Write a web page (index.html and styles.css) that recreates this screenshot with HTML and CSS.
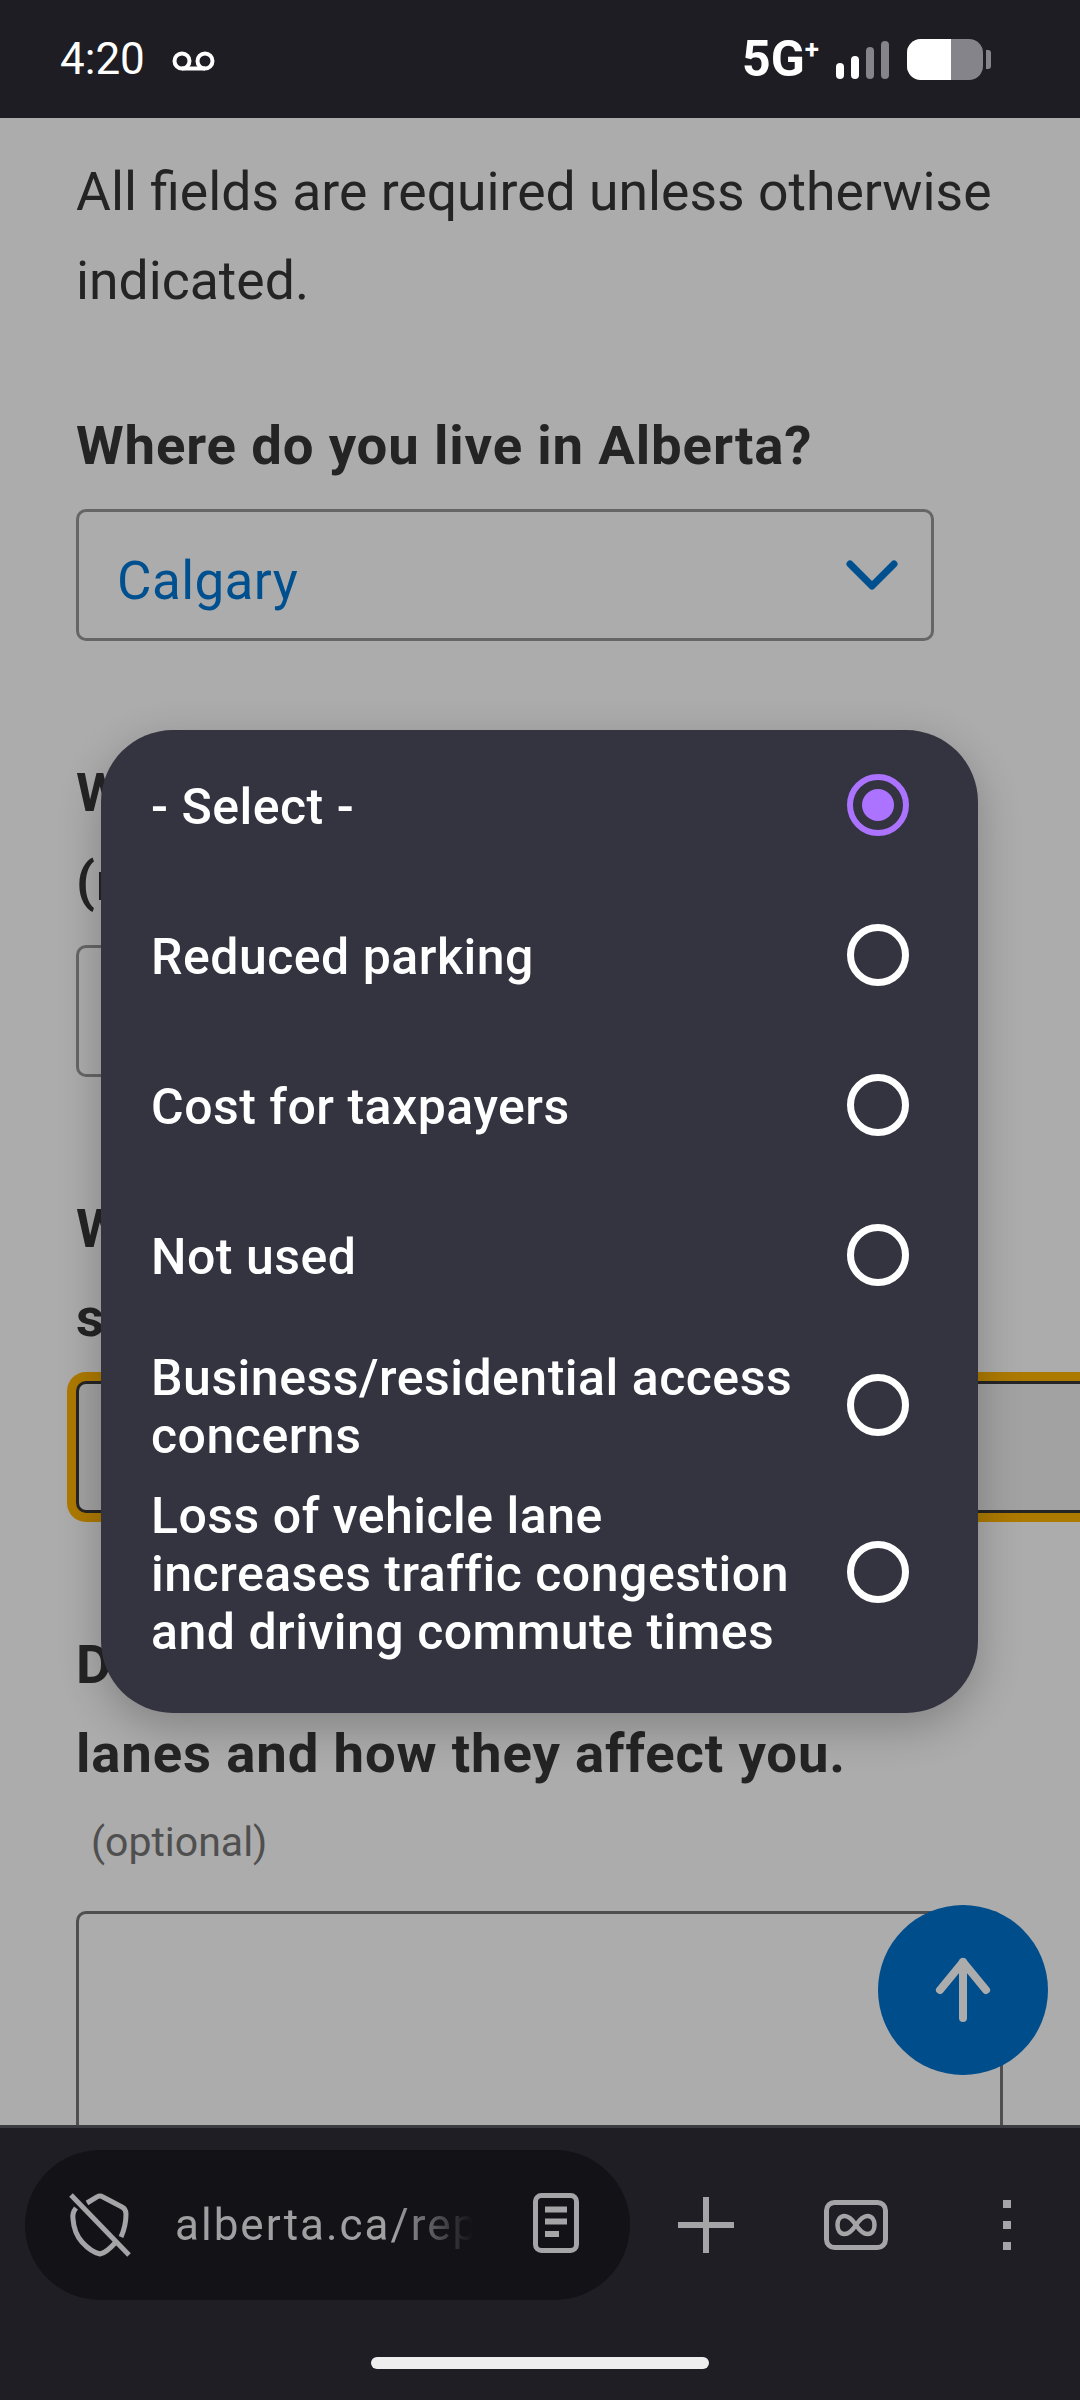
FILE: index.html

```html
<!DOCTYPE html>
<html lang="en">
<head>
  <meta charset="UTF-8" />
  <meta name="viewport" content="width=device-width, initial-scale=1" />
  <title>Report - alberta.ca</title>
  <link rel="stylesheet" href="styles.css">
</head>
<body>
  <header class="status-bar">
    <div class="status-left">
      <span class="clock">4:20</span>
      <svg class="voicemail" width="43" height="20" viewBox="0 0 43 20" fill="none" stroke="#fff" stroke-width="4">
        <circle cx="10" cy="10" r="7.5" />
        <circle cx="33" cy="10" r="7.5" />
        <path d="M10 17.5H33" />
      </svg>
    </div>
    <div class="status-right">
      <span class="network">5G<sup>+</sup></span>
      <div class="signal">
        <span class="bar bar-1"></span>
        <span class="bar bar-2"></span>
        <span class="bar bar-3 off"></span>
        <span class="bar bar-4 off"></span>
      </div>
      <div class="battery"><div class="battery-fill"></div></div>
      <div class="battery-tip"></div>
    </div>
  </header>

  <main class="page">
    <p class="intro">All fields are required unless otherwise indicated.</p>

    <label class="question">Where do you live in Alberta?</label>
    <div class="field select-field">
      <span class="select-value">Calgary</span>
      <svg class="chevron" width="52" height="30" viewBox="0 0 52 30" fill="none" stroke="#00508f" stroke-width="7" stroke-linecap="round" stroke-linejoin="round">
        <path d="M4 4L26 26L48 4" />
      </svg>
    </div>

    <label class="question">W<br>(r</label>
    <div class="field short-field"></div>

    <label class="question">W<br>s</label>
    <div class="field focused"></div>

    <label class="question">D<br>lanes and how they affect you.</label>
    <div class="optional">(optional)</div>
    <div class="textarea"></div>
  </main>

  <button class="to-top" type="button" aria-label="Back to top">
    <svg width="56" height="66" viewBox="0 0 56 66" fill="none" stroke="#acacac" stroke-width="8" stroke-linecap="round" stroke-linejoin="round">
      <path d="M28 5V61" />
      <path d="M5 33L28 5L51 33" />
    </svg>
  </button>

  <div class="picker">
    <div class="option">
      <span class="option-label">- Select -</span>
      <span class="radio checked"></span>
    </div>
    <div class="option">
      <span class="option-label">Reduced parking</span>
      <span class="radio"></span>
    </div>
    <div class="option">
      <span class="option-label">Cost for taxpayers</span>
      <span class="radio"></span>
    </div>
    <div class="option">
      <span class="option-label">Not used</span>
      <span class="radio"></span>
    </div>
    <div class="option">
      <span class="option-label">Business/residential access concerns</span>
      <span class="radio"></span>
    </div>
    <div class="option">
      <span class="option-label">Loss of vehicle lane increases traffic congestion and driving commute times</span>
      <span class="radio"></span>
    </div>
  </div>

  <footer class="browser-bar">
    <div class="toolbar">
      <div class="url-pill">
        <svg class="shield" width="62" height="64" viewBox="0 0 62 64" fill="none" stroke="#a5a5a8" stroke-width="5">
          <path d="M2 2L60 62" />
          <path d="M18 10L28 4Q31 2 34 4L53 14Q57 16 57 21Q57 33 52 44" />
          <path d="M7 15Q3 20 4 26Q5 40 13 49Q22 59 31 61Q37 60 46 50" />
        </svg>
        <span class="url">alberta.ca/rep</span>
        <svg class="reader" width="46" height="60" viewBox="0 0 46 60" fill="none" stroke="#a5a5a8">
          <rect x="2.5" y="2.5" width="41" height="55" rx="6" stroke-width="5" />
          <path d="M12 16.5H34M12 28.5H34M12 41H26" stroke-width="6" />
        </svg>
      </div>
      <svg class="plus" width="56" height="56" viewBox="0 0 56 56" fill="none" stroke="#a5a5a8" stroke-width="6">
        <path d="M28 0V56M0 28H56" />
      </svg>
      <svg class="tabs" width="64" height="50" viewBox="0 0 64 50" fill="none" stroke="#a5a5a8">
        <rect x="2.5" y="2.500" width="59" height="45" rx="8" stroke-width="5" />
        <path d="M32 25C28 19 24 16 20.500 16C16 16 13.500 20 13.500 25C13.500 30 16 34 20.500 34C24 34 28 31 32 25C36 19 40 16 43.500 16C48 16 50.500 20 50.500 25C50.500 30 48 34 43.500 34C40 34 36 31 32 25Z" stroke-width="4.500" />
      </svg>
      <div class="menu-dots">
        <span></span>
        <span></span>
        <span></span>
      </div>
    </div>
    <div class="home-pill"></div>
  </footer>
</body>
</html>
```

FILE: styles.css

```css
* {
  box-sizing: border-box;
}
html, body {
  margin: 0;
  padding: 0;
}
body {
  position: relative;
  display: flex;
  flex-direction: column;
  width: 1080px;
  height: 2400px;
  overflow: hidden;
  background-color: #acacac;
  font-family: Roboto, sans-serif;
}

/* status bar */
.status-bar {
  display: flex;
  justify-content: space-between;
  align-items: center;
  height: 118px;
  flex: none;
  padding: 0 89px 0 60px;
  background-color: #1d1d23;
  color: white;
}
.status-left {
  display: flex;
  align-items: center;
  gap: 27px;
}
.clock {
  font-size: 44px;
  line-height: 44px;
}
.voicemail {
  margin-top: 4px;
}
.status-right {
  display: flex;
  align-items: center;
}
.network {
  width: 73px;
  margin-left: -3px;
  margin-right: 21px;
  font-family: "Liberation Sans Narrow", Roboto, sans-serif;
  font-size: 50px;
  font-weight: 700;
  line-height: 50px;
  white-space: nowrap;
}
.network sup {
  font-family: Roboto, sans-serif;
  font-size: 26px;
  line-height: 0;
  vertical-align: 18px;
}
.signal {
  display: flex;
  align-items: flex-end;
  gap: 7px;
  height: 38px;
  margin-top: 1px;
  margin-right: 18px;
}
.bar {
  width: 8px;
  border-radius: 4px;
  background-color: white;
}
.bar.off {
  background-color: #85848a;
}
.bar-1 { height: 16px; }
.bar-2 { height: 23px; }
.bar-3 { height: 32px; }
.bar-4 { height: 38px; }
.battery {
  width: 76px;
  height: 41px;
  border-radius: 14px;
  overflow: hidden;
  background-color: #85848a;
}
.battery-fill {
  width: 44px;
  height: 100%;
  background-color: white;
}
.battery-tip {
  width: 5px;
  height: 19px;
  margin-left: 3px;
  border-radius: 0 3px 3px 0;
  background-color: #85848a;
}

/* page behind the picker */
.page {
  flex: 1;
  min-height: 0;
  padding: 29px 0 0 76px;
  overflow: hidden;
  color: #242424;
}
.intro {
  width: 926px;
  margin: 0 0 76px;
  font-size: 53.5px;
  line-height: 89px;
}
.question {
  display: block;
  margin-bottom: 19px;
  font-size: 54.5px;
  font-weight: bold;
  letter-spacing: 0.85px;
  line-height: 89px;
}
.field {
  height: 132px;
  margin-bottom: 107px;
  border: 3px solid #666;
  border-radius: 10px;
}
.select-field {
  display: flex;
  justify-content: space-between;
  align-items: center;
  width: 858px;
  padding: 0 33px 0 38px;
}
.short-field {
  width: 858px;
}
.select-value {
  margin-top: 11px;
  font-size: 53px;
  letter-spacing: 0.4px;
  color: #00508f;
}
.field.focused {
  width: 1100px;
  border-color: #252525;
  background-color: #a2a2a2;
  box-shadow: 0 0 0 9px #ad7a00;
}
.optional {
  margin: -5px 0 0 15px;
  font-size: 41px;
  line-height: 60px;
  color: #4f4f4f;
}
.textarea {
  width: 927px;
  height: 300px;
  margin-top: 39px;
  border: 3px solid #4f4f4f;
  border-radius: 10px;
}

/* floating button */
.to-top {
  position: absolute;
  left: 878px;
  top: 1905px;
  display: flex;
  justify-content: center;
  align-items: center;
  width: 170px;
  height: 170px;
  padding: 0;
  border: none;
  border-radius: 50%;
  background-color: #004d8c;
}

/* select picker */
.picker {
  position: absolute;
  left: 101px;
  top: 730px;
  width: 877px;
  height: 983px;
  padding-right: 69px;
  border-radius: 72px;
  background-color: #343340;
  box-shadow: 0 14px 44px rgba(0,0,0,0.24);
  color: white;
}
.option {
  display: flex;
  justify-content: space-between;
  align-items: center;
  gap: 40px;
  min-height: 150px;
  padding-left: 50px;
}
.option:last-child {
  min-height: 184px;
}
.option-label {
  flex: 1;
  margin-top: 4px;
  font-size: 50px;
  font-weight: 500;
  letter-spacing: 0.5px;
  line-height: 58px;
}
.radio {
  position: relative;
  flex: none;
  width: 62px;
  height: 62px;
  border: 7px solid white;
  border-radius: 50%;
}
.radio.checked {
  border-width: 6px;
  border-color: #ab73ff;
}
.radio.checked::after {
  content: "";
  position: absolute;
  left: 9px;
  top: 9px;
  width: 32px;
  height: 32px;
  border-radius: 50%;
  background-color: #ab73ff;
}

/* browser toolbar */
.browser-bar {
  flex: none;
  height: 275px;
  border-top: 3px solid #3b3b42;
  background-color: #1e1e24;
}
.toolbar {
  display: flex;
  align-items: center;
  height: 150px;
  margin-top: 22px;
  padding-left: 25px;
}
.url-pill {
  display: flex;
  align-items: center;
  width: 605px;
  height: 150px;
  padding-left: 44px;
  border-radius: 75px;
  background-color: #131317;
}
.url {
  width: 304px;
  margin-left: 44px;
  overflow: hidden;
  font-size: 44px;
  letter-spacing: 2px;
  white-space: nowrap;
  color: #a0a0a3;
  -webkit-mask-image: linear-gradient(to right, black 72%, transparent 98%);
  mask-image: linear-gradient(to right, black 72%, transparent 98%);
}
.reader {
  margin-left: 54px;
  margin-bottom: 5px;
}
.plus {
  margin-left: 48px;
}
.tabs {
  margin-left: 90px;
}
.menu-dots {
  display: flex;
  flex-direction: column;
  gap: 13px;
  margin-left: 115px;
}
.menu-dots span {
  width: 8px;
  height: 8px;
  background-color: #a5a5a8;
}
.home-pill {
  width: 338px;
  height: 12px;
  margin: 57px 0 0 371px;
  border-radius: 6px;
  background-color: #eee;
}
```
